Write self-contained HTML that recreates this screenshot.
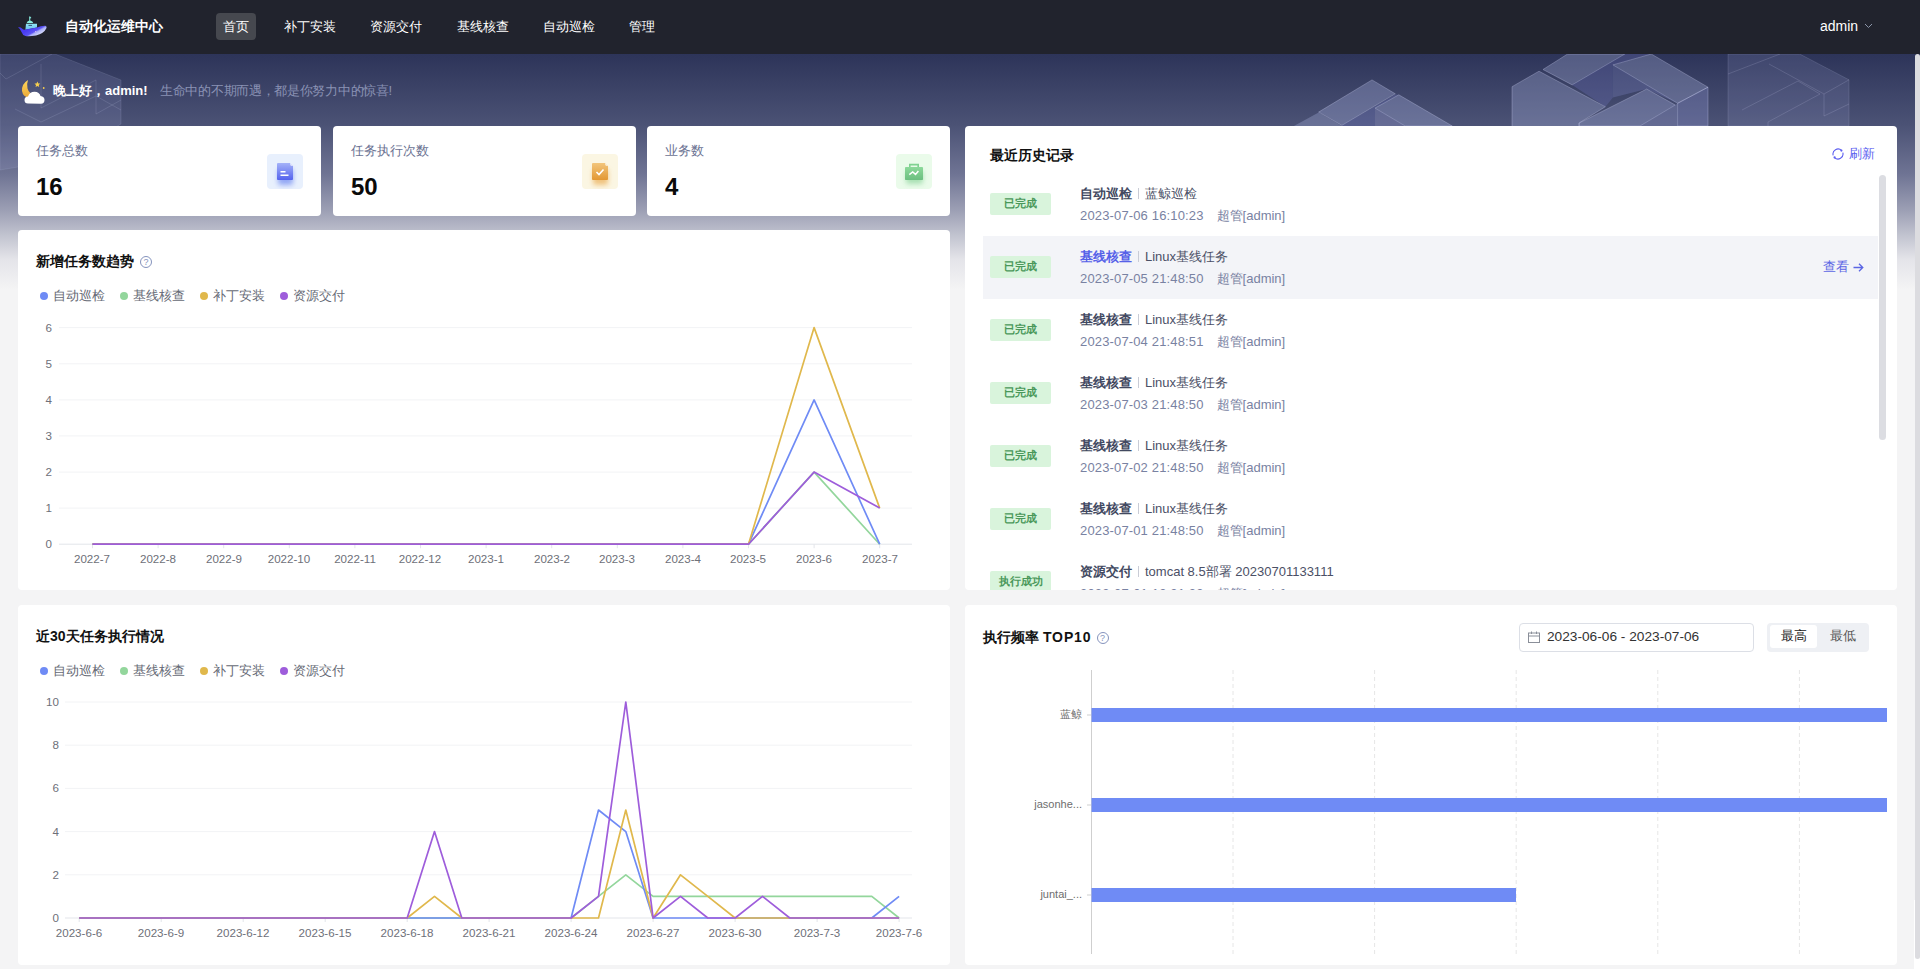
<!DOCTYPE html>
<html><head><meta charset="utf-8"><title>自动化运维中心</title>
<style>
*{box-sizing:border-box;margin:0;padding:0}
html,body{width:1920px;height:969px;overflow:hidden}
body{background:#f4f4f5;font-family:"Liberation Sans",sans-serif;position:relative;color:#222}
.abs{position:absolute}
#nav{position:absolute;left:0;top:0;width:1920px;height:54px;background:#21232d}
.ni{position:absolute;top:13px;height:27px;line-height:27px;font-size:13px;color:#fff;white-space:nowrap}
#banner{position:absolute;left:0;top:54px;width:1920px;height:236px;background:linear-gradient(180deg,#2d3459 0%,#4b5275 30%,#6f7494 51%,#9da0b5 66.5%,#c2c4d0 77%,#e4e4e9 87%,#f4f4f5 100%)}
.card{position:absolute;background:#fff;border-radius:4px}
.st-l{position:absolute;left:18px;top:16px;font-size:13px;color:#6b7292;line-height:17px}
.st-v{position:absolute;left:18px;top:47px;font-size:24px;font-weight:bold;color:#0a0a0a;line-height:28px}
.ibox{position:absolute;right:18px;top:28px;width:36px;height:35px;border-radius:4px}
.ptitle{position:absolute;font-size:14px;font-weight:bold;color:#111;line-height:18px;white-space:nowrap}
.lg{position:absolute;font-size:12.5px;color:#666a75;line-height:14px;white-space:nowrap}
.lg i{display:inline-block;width:8px;height:8px;border-radius:50%;margin-right:5px;vertical-align:0px}
.yl{position:absolute;font-size:11.6px;color:#6e7079;text-align:right;line-height:16px}
.xl{position:absolute;width:80px;text-align:center;font-size:11.6px;color:#6e7079;line-height:16px}
.row{position:absolute;left:18px;width:895px;height:63px}
.row.hl{background:#f3f4f8}
.tag{position:absolute;left:7px;top:20px;width:61px;height:22px;line-height:21px;text-align:center;background:#d9f4dc;color:#4a985a;font-size:11px;font-weight:600;border-radius:2px}
.r1{position:absolute;left:97px;top:12px;font-size:13px;line-height:17px;color:#4b5066;white-space:nowrap}
.r1 b{color:#424961}
.r1 b.lk{color:#5661e8;font-weight:bold}
.sep{display:inline-block;width:1px;height:11px;background:#c9ccd6;margin:0 6px 0 6px;vertical-align:-1px}
.r2{position:absolute;left:97px;top:34px;font-size:13px;line-height:17px;color:#7982a2;white-space:nowrap;letter-spacing:0.15px}
.who{margin-left:13px;letter-spacing:0}
.view{position:absolute;left:840px;top:22px;font-size:13px;line-height:17px;color:#5b66e4}
.q{display:inline-block;width:12px;height:12px;border:1px solid #8593bd;border-radius:50%;font-size:9px;line-height:10px;text-align:center;color:#8593bd;font-weight:normal;vertical-align:1px;margin-left:2px}
</style></head><body>
<div id="nav">
  <svg class="abs" style="left:17px;top:15px" width="31" height="23" viewBox="0 0 31 23">
    <defs>
      <linearGradient id="wg" gradientUnits="userSpaceOnUse" x1="16.5" y1="12" x2="21.5" y2="21"><stop offset="0" stop-color="#4a3cf2"/><stop offset="0.42" stop-color="#5a52f4"/><stop offset="0.58" stop-color="#a9aff8"/><stop offset="1" stop-color="#e0e4fc"/></linearGradient>
      <linearGradient id="cg" x1="0" y1="0" x2="0" y2="1"><stop offset="0" stop-color="#8fe6f2"/><stop offset="1" stop-color="#6cbef0"/></linearGradient>
    </defs>
    <path d="M12.1 1.6 L13.2 1.6 L14.4 3 L13.2 3.5 L13.2 5.5 Q16 6 16.2 8 L9.7 8 Q10 6 12.3 5.5 Z" fill="#88ecdf"/>
    <path d="M9 8.7 L20 8.7 L20 12.6 L8.4 14.8 Z" fill="url(#cg)"/>
    <rect x="11.5" y="9.9" width="3.5" height="1.1" fill="#3e5f86"/>
    <path d="M1 12.3 Q3.5 11.8 5 13.5 Q6.5 15 8.5 14.6 L20 12.6 Q24 10.6 28.5 10.8 Q30 11.5 29.5 13 Q27 18.5 19 20.5 Q12 21.7 8.5 21 Q5.5 20.3 4.5 17 Q3.5 14 1 12.3 Z" fill="url(#wg)"/>
    <circle cx="18.7" cy="16.6" r="0.6" fill="#e8c0f8"/>
  </svg>
  <div class="ni" style="left:65px;font-weight:bold;font-size:14px">自动化运维中心</div>
  <div class="abs" style="left:216px;top:13px;width:40px;height:27px;border-radius:4px;background:#46484f"></div>
  <div class="ni" style="left:223px">首页</div>
  <div class="ni" style="left:284px">补丁安装</div>
  <div class="ni" style="left:370px">资源交付</div>
  <div class="ni" style="left:457px">基线核查</div>
  <div class="ni" style="left:543px">自动巡检</div>
  <div class="ni" style="left:629px">管理</div>
  <div class="ni" style="left:1820px;font-size:14px">admin</div>
  <svg class="abs" style="left:1864px;top:23px" width="9" height="6" viewBox="0 0 9 6"><path d="M1 1 L4.5 4.5 L8 1" fill="none" stroke="#8c96aa" stroke-width="1"/></svg>
</div>
<div id="banner"></div>
<svg class="abs" style="left:0;top:54px" width="1920" height="240" viewBox="0 54 1920 240">
  <defs>
   <linearGradient id="tf" x1="0" y1="0" x2="1" y2="0"><stop offset="0" stop-color="rgba(185,195,235,0.32)"/><stop offset="0.5" stop-color="rgba(170,185,225,0.36)"/><stop offset="1" stop-color="rgba(190,195,235,0.3)"/></linearGradient>
  </defs>
  <g stroke="rgba(215,220,250,0.28)" stroke-width="1">
  <!-- cluster A -->
  <polygon points="1318.6,112.1 1372,79.9 1395.3,93.8 1341.9,125.4" fill="rgba(175,185,230,0.32)"/>
  <polygon points="1293.9,126 1318.6,112.6 1341.9,126" fill="rgba(175,185,230,0.3)" stroke="none"/>
  <polygon points="1341.9,125.4 1395.3,94.5 1398.8,94.8 1375,108.1 1375,126 1341.9,126" fill="rgba(120,125,205,0.28)" stroke="none"/>
  <polygon points="1375,108.1 1398.8,94.8 1452.3,126 1405.2,126" fill="rgba(175,185,230,0.32)"/>
  <polygon points="1375,108.1 1405.2,126 1375,126" fill="rgba(165,170,225,0.3)" stroke="none"/>
  <!-- cluster B -->
  <polygon points="1512,86.7 1539,71.2 1605.4,106.7 1579.1,123 1579.1,126.5 1512,126.5" fill="rgba(175,185,230,0.3)"/>
  <polygon points="1543,69.5 1567.6,54 1624.9,54 1572.2,84.9" fill="rgba(175,185,230,0.3)"/>
  <polygon points="1572.2,84.9 1624.9,54 1651.3,54 1612.9,64.9 1612.9,97.5 1605.4,106.7" fill="rgba(120,125,205,0.26)" stroke="none"/>
  <polygon points="1612.9,64.9 1651.3,54 1708,87.2 1677.6,103.3" fill="rgba(175,185,230,0.3)"/>
  <polygon points="1612.9,64.9 1677.6,103.3 1646.7,89 1612.9,97.5" fill="rgba(140,145,215,0.26)" stroke="none"/>
  <polygon points="1579.1,123 1646.7,89 1675.3,105 1640,126 1579.1,126" fill="rgba(175,185,230,0.32)"/>
  <polygon points="1677.6,103.3 1708,87.2 1708,126 1677.6,126" fill="rgba(150,155,220,0.3)"/>
  <polygon points="1640,126 1675.3,105 1677.6,103.3 1677.6,126" fill="rgba(160,165,220,0.3)" stroke="none"/>
  <!-- cluster C (faint) -->
  <polygon points="1728,54 1799.7,54 1849,79.8 1849,126 1728,126" fill="rgba(160,170,220,0.16)" stroke="rgba(215,220,250,0.14)"/>
  <polyline points="1728,74 1780,54" fill="none" stroke="rgba(215,220,250,0.16)"/>
  <polyline points="1769,64 1824,94 1849,79.8" fill="none" stroke="rgba(215,220,250,0.16)"/>
  <polyline points="1824,94 1824,116 1849,104" fill="none" stroke="rgba(215,220,250,0.16)"/>
  <polyline points="1742,110 1798,81 1820,94 1768,122 1768,126" fill="none" stroke="rgba(215,220,250,0.16)"/>
  <!-- right margin piece -->
  <!-- left cluster (faint) -->
  <polygon points="0,54 55,54 121,80 121,124 60,160 0,170" fill="rgba(160,170,220,0.16)" stroke="rgba(215,220,250,0.12)"/>
  <polyline points="0,73 6,79 52,54" fill="none" stroke="rgba(215,220,250,0.14)"/>
  <polyline points="41,64 41,108 96,80" fill="none" stroke="rgba(215,220,250,0.14)"/>
  <polyline points="15,109 41,122 96,96 121,110" fill="none" stroke="rgba(215,220,250,0.14)"/>
  <polyline points="96,80 96,114 121,100" fill="none" stroke="rgba(215,220,250,0.14)"/>
  </g>
</svg>
<!-- greeting -->
<svg class="abs" style="left:20px;top:78px" width="28" height="28" viewBox="0 0 28 28">
  <defs><linearGradient id="mg" x1="0" y1="0" x2="0" y2="1"><stop offset="0" stop-color="#ffd65a"/><stop offset="1" stop-color="#e9a838"/></linearGradient></defs>
  <path d="M8 2 Q1.5 6 2 13 Q3 19 9 19.5 Q13 19.5 15 16 Q9 16 7.5 10.5 Q6.5 6 8 2 Z" fill="url(#mg)"/>
  <path d="M17.4 3.5 L18.3 5.4 L20.3 5.6 L18.8 6.9 L19.2 8.9 L17.4 7.9 L15.6 8.9 L16 6.9 L14.5 5.6 L16.5 5.4 Z" fill="#f6cf4e"/>
  <circle cx="23.7" cy="10" r="0.9" fill="#f6cf4e"/>
  <path d="M8 25.5 Q4.5 25.5 4.5 22 Q4.5 18.8 8 18.5 Q9.5 14 14.5 13.8 Q19.5 14 20.5 18 Q24.5 18.5 24.5 22 Q24.5 25.5 21 25.8 Z" fill="#ffffff"/>
</svg>
<div class="abs" style="left:53px;top:82px;font-size:13px;font-weight:bold;color:#fff;line-height:18px;white-space:nowrap">晚上好，admin!</div>
<div class="abs" style="left:160px;top:82px;font-size:13px;color:#8a92b4;line-height:18px;white-space:nowrap;letter-spacing:-0.3px">生命中的不期而遇，都是你努力中的惊喜!</div>

<!-- stat cards -->
<div class="card" style="left:18px;top:126px;width:303px;height:90px">
  <div class="st-l">任务总数</div><div class="st-v">16</div>
  <div class="ibox" style="background:#e8f0fd">
    <svg width="36" height="35" viewBox="0 0 36 35"><defs><linearGradient id="g1" x1="0" y1="0" x2="0" y2="1"><stop offset="0" stop-color="#a4b2f8"/><stop offset="1" stop-color="#5563ee"/></linearGradient><filter id="f1" x="-50%" y="-50%" width="200%" height="200%"><feGaussianBlur stdDeviation="2.6"/></filter></defs>
    <rect x="11" y="15" width="15" height="16" rx="2" fill="#6f8af2" opacity="0.7" filter="url(#f1)"/>
    <path d="M11 9 L23 9 L26 12 L26 25 Q26 26 25 26 L11 26 Q10 26 10 25 L10 10 Q10 9 11 9 Z" fill="url(#g1)"/>
    <path d="M23 9 L26 12 L23.6 11.6 Z" fill="#fff" opacity="0.9"/><rect x="13.5" y="17" width="5" height="1.5" fill="#fff"/><rect x="13.5" y="20.5" width="8" height="1.5" fill="#fff"/>
    </svg>
  </div>
</div>
<div class="card" style="left:333px;top:126px;width:303px;height:90px">
  <div class="st-l">任务执行次数</div><div class="st-v">50</div>
  <div class="ibox" style="background:#fbf6e3">
    <svg width="36" height="35" viewBox="0 0 36 35"><defs><linearGradient id="g2" x1="0" y1="0" x2="0" y2="1"><stop offset="0" stop-color="#f2c57c"/><stop offset="1" stop-color="#e39833"/></linearGradient><filter id="f2" x="-50%" y="-50%" width="200%" height="200%"><feGaussianBlur stdDeviation="2.6"/></filter></defs>
    <rect x="11" y="15" width="15" height="16" rx="2" fill="#eaa84a" opacity="0.65" filter="url(#f2)"/>
    <path d="M11 9 L23 9 L26 12 L26 25 Q26 26 25 26 L11 26 Q10 26 10 25 L10 10 Q10 9 11 9 Z" fill="url(#g2)"/>
    <path d="M23 9 L26 12 L23.6 11.6 Z" fill="#fff" opacity="0.9"/><path d="M14.5 18 L17 20.5 L21.5 15.5" fill="none" stroke="#fff" stroke-width="1.6"/>
    </svg>
  </div>
</div>
<div class="card" style="left:647px;top:126px;width:303px;height:90px">
  <div class="st-l">业务数</div><div class="st-v">4</div>
  <div class="ibox" style="background:#eafbea">
    <svg width="36" height="35" viewBox="0 0 36 35"><defs><linearGradient id="g3" x1="0" y1="0" x2="0" y2="1"><stop offset="0" stop-color="#8cd99a"/><stop offset="1" stop-color="#6cbf80"/></linearGradient><filter id="f3" x="-50%" y="-50%" width="200%" height="200%"><feGaussianBlur stdDeviation="2.6"/></filter></defs>
    <rect x="10" y="17" width="17" height="13" rx="2" fill="#7fcf90" opacity="0.6" filter="url(#f3)"/>
    <path d="M13.8 13 L13.8 10.6 L22.2 10.6 L22.2 13" fill="none" stroke="#80d291" stroke-width="1.6"/>
    <rect x="9" y="13" width="18" height="13" rx="0.8" fill="url(#g3)"/>
    <path d="M13.3 20.6 L16.7 18 L19.5 20.4 L22.4 17" fill="none" stroke="#fff" stroke-width="1.5"/>
    </svg>
  </div>
</div>

<!-- panels -->
<div class="card" style="left:18px;top:230px;width:932px;height:360px"></div>
<div class="card" style="left:965px;top:126px;width:932px;height:464px;overflow:hidden">
  <div class="ptitle" style="left:25px;top:20px">最近历史记录</div>
  <svg class="abs" style="left:867px;top:22px" width="12" height="12" viewBox="0 0 12 12"><path d="M10.83 4.71 A5 5 0 0 1 2.46 9.54" fill="none" stroke="#5d5ff0" stroke-width="1.1"/><path d="M1.17 7.29 A5 5 0 0 1 9.54 2.46" fill="none" stroke="#5d5ff0" stroke-width="1.1"/><circle cx="2.6" cy="9.4" r="1.1" fill="#5d5ff0"/><circle cx="9.4" cy="2.6" r="1.1" fill="#5d5ff0"/></svg>
  <div class="abs" style="left:884px;top:20px;font-size:13px;color:#5d5ff0;line-height:16px;white-space:nowrap">刷新</div>
  <div class="row" style="top:47px">
<span class="tag">已完成</span>
<div class="r1"><b>自动巡检</b><i class="sep"></i><span>蓝鲸巡检</span></div>
<div class="r2">2023-07-06 16:10:23<span class="who">超管[admin]</span></div>

</div>
<div class="row hl" style="top:110px">
<span class="tag">已完成</span>
<div class="r1"><b class="lk">基线核查</b><i class="sep"></i><span>Linux基线任务</span></div>
<div class="r2">2023-07-05 21:48:50<span class="who">超管[admin]</span></div>
<div class="view">查看</div><svg class="abs" style="left:870px;top:27px" width="11" height="9" viewBox="0 0 11 9"><path d="M0.5 4.5 L10 4.5 M6 0.8 L9.8 4.5 L6 8.2" fill="none" stroke="#5b66e4" stroke-width="1.3"/></svg>
</div>
<div class="row" style="top:173px">
<span class="tag">已完成</span>
<div class="r1"><b>基线核查</b><i class="sep"></i><span>Linux基线任务</span></div>
<div class="r2">2023-07-04 21:48:51<span class="who">超管[admin]</span></div>

</div>
<div class="row" style="top:236px">
<span class="tag">已完成</span>
<div class="r1"><b>基线核查</b><i class="sep"></i><span>Linux基线任务</span></div>
<div class="r2">2023-07-03 21:48:50<span class="who">超管[admin]</span></div>

</div>
<div class="row" style="top:299px">
<span class="tag">已完成</span>
<div class="r1"><b>基线核查</b><i class="sep"></i><span>Linux基线任务</span></div>
<div class="r2">2023-07-02 21:48:50<span class="who">超管[admin]</span></div>

</div>
<div class="row" style="top:362px">
<span class="tag">已完成</span>
<div class="r1"><b>基线核查</b><i class="sep"></i><span>Linux基线任务</span></div>
<div class="r2">2023-07-01 21:48:50<span class="who">超管[admin]</span></div>

</div>
<div class="row" style="top:425px">
<span class="tag">执行成功</span>
<div class="r1"><b>资源交付</b><i class="sep"></i><span>tomcat 8.5部署 20230701133111</span></div>
<div class="r2">2023-07-01 13:31:33<span class="who">超管[admin]</span></div>

</div>
  <div class="abs" style="left:914px;top:49px;width:7px;height:265px;border-radius:4px;background:#dcdde2"></div>
</div>
<div class="card" style="left:18px;top:605px;width:932px;height:360px"></div>
<div class="card" style="left:965px;top:605px;width:932px;height:360px"></div>

<!-- chart texts -->
<div class="ptitle" style="left:36px;top:252px">新增任务数趋势 <span class="q">?</span></div>
<div class="lg" style="left:40px;top:289px"><i style="background:#6f8bf5"></i>自动巡检</div>
<div class="lg" style="left:120px;top:289px"><i style="background:#93d69c"></i>基线核查</div>
<div class="lg" style="left:200px;top:289px"><i style="background:#e0b84c"></i>补丁安装</div>
<div class="lg" style="left:280px;top:289px"><i style="background:#9e5ddb"></i>资源交付</div>
<div class="ptitle" style="left:36px;top:627px">近30天任务执行情况</div>
<div class="lg" style="left:40px;top:664px"><i style="background:#6f8bf5"></i>自动巡检</div>
<div class="lg" style="left:120px;top:664px"><i style="background:#93d69c"></i>基线核查</div>
<div class="lg" style="left:200px;top:664px"><i style="background:#e0b84c"></i>补丁安装</div>
<div class="lg" style="left:280px;top:664px"><i style="background:#9e5ddb"></i>资源交付</div>
<div class="ptitle" style="left:983px;top:628px">执行频率 <span style="letter-spacing:0.9px">TOP10</span><span class="q" style="margin-left:5px">?</span></div>
<div class="yl" style="left:30px;top:536px;width:22px">0</div>
<div class="yl" style="left:30px;top:500px;width:22px">1</div>
<div class="yl" style="left:30px;top:464px;width:22px">2</div>
<div class="yl" style="left:30px;top:428px;width:22px">3</div>
<div class="yl" style="left:30px;top:392px;width:22px">4</div>
<div class="yl" style="left:30px;top:356px;width:22px">5</div>
<div class="yl" style="left:30px;top:320px;width:22px">6</div>
<div class="xl" style="left:52px;top:551px">2022-7</div>
<div class="xl" style="left:118px;top:551px">2022-8</div>
<div class="xl" style="left:184px;top:551px">2022-9</div>
<div class="xl" style="left:249px;top:551px">2022-10</div>
<div class="xl" style="left:315px;top:551px">2022-11</div>
<div class="xl" style="left:380px;top:551px">2022-12</div>
<div class="xl" style="left:446px;top:551px">2023-1</div>
<div class="xl" style="left:512px;top:551px">2023-2</div>
<div class="xl" style="left:577px;top:551px">2023-3</div>
<div class="xl" style="left:643px;top:551px">2023-4</div>
<div class="xl" style="left:708px;top:551px">2023-5</div>
<div class="xl" style="left:774px;top:551px">2023-6</div>
<div class="xl" style="left:840px;top:551px">2023-7</div>
<div class="yl" style="left:30px;top:910px;width:29px">0</div>
<div class="yl" style="left:30px;top:867px;width:29px">2</div>
<div class="yl" style="left:30px;top:824px;width:29px">4</div>
<div class="yl" style="left:30px;top:780px;width:29px">6</div>
<div class="yl" style="left:30px;top:737px;width:29px">8</div>
<div class="yl" style="left:30px;top:694px;width:29px">10</div>
<div class="xl" style="left:39px;top:925px">2023-6-6</div>
<div class="xl" style="left:121px;top:925px">2023-6-9</div>
<div class="xl" style="left:203px;top:925px">2023-6-12</div>
<div class="xl" style="left:285px;top:925px">2023-6-15</div>
<div class="xl" style="left:367px;top:925px">2023-6-18</div>
<div class="xl" style="left:449px;top:925px">2023-6-21</div>
<div class="xl" style="left:531px;top:925px">2023-6-24</div>
<div class="xl" style="left:613px;top:925px">2023-6-27</div>
<div class="xl" style="left:695px;top:925px">2023-6-30</div>
<div class="xl" style="left:777px;top:925px">2023-7-3</div>
<div class="xl" style="left:859px;top:925px">2023-7-6</div>
<div class="abs" style="left:1000px;top:706px;width:82px;text-align:right;font-size:11px;color:#6e6e6e;line-height:16px">蓝鲸</div>
<div class="abs" style="left:1000px;top:796px;width:82px;text-align:right;font-size:11px;color:#6e6e6e;line-height:16px">jasonhe...</div>
<div class="abs" style="left:1000px;top:886px;width:82px;text-align:right;font-size:11px;color:#6e6e6e;line-height:16px">juntai_...</div>
<!-- date picker -->
<div class="abs" style="left:1519px;top:623px;width:235px;height:29px;border:1px solid #dcdfe6;border-radius:4px;background:#fff"></div>
<svg class="abs" style="left:1528px;top:631px" width="12" height="12" viewBox="0 0 12 12"><rect x="0.5" y="2" width="11" height="9.5" fill="none" stroke="#8a8f99" stroke-width="1"/><line x1="0.5" y1="5" x2="11.5" y2="5" stroke="#8a8f99"/><line x1="3.5" y1="0.5" x2="3.5" y2="3" stroke="#8a8f99"/><line x1="8.5" y1="0.5" x2="8.5" y2="3" stroke="#8a8f99"/></svg>
<div class="abs" style="left:1547px;top:629px;font-size:13.7px;color:#333;line-height:16px;white-space:nowrap">2023-06-06 - 2023-07-06</div>
<div class="abs" style="left:1767px;top:623px;width:102px;height:29px;border-radius:4px;background:#eef0f4"></div>
<div class="abs" style="left:1770px;top:625px;width:47px;height:23px;border-radius:3px;background:#fff"></div>
<div class="abs" style="left:1770px;top:628px;width:47px;text-align:center;font-size:13px;color:#222;line-height:16px">最高</div>
<div class="abs" style="left:1819px;top:628px;width:47px;text-align:center;font-size:13px;color:#555;line-height:16px">最低</div>

<svg class="abs" style="left:0;top:0" width="1920" height="969">
<line x1="59" y1="508.1" x2="912" y2="508.1" stroke="#f2f3f5" stroke-width="1"/>
<line x1="59" y1="472.1" x2="912" y2="472.1" stroke="#f2f3f5" stroke-width="1"/>
<line x1="59" y1="435.9" x2="912" y2="435.9" stroke="#f2f3f5" stroke-width="1"/>
<line x1="59" y1="399.9" x2="912" y2="399.9" stroke="#f2f3f5" stroke-width="1"/>
<line x1="59" y1="363.8" x2="912" y2="363.8" stroke="#f2f3f5" stroke-width="1"/>
<line x1="59" y1="327.6" x2="912" y2="327.6" stroke="#f2f3f5" stroke-width="1"/>
<line x1="59" y1="544.2" x2="912" y2="544.2" stroke="#e3e5ea" stroke-width="1"/>
<line x1="92.5" y1="544.2" x2="92.5" y2="548.2" stroke="#e3e5ea" stroke-width="1"/>
<line x1="158.1" y1="544.2" x2="158.1" y2="548.2" stroke="#e3e5ea" stroke-width="1"/>
<line x1="223.7" y1="544.2" x2="223.7" y2="548.2" stroke="#e3e5ea" stroke-width="1"/>
<line x1="289.3" y1="544.2" x2="289.3" y2="548.2" stroke="#e3e5ea" stroke-width="1"/>
<line x1="354.9" y1="544.2" x2="354.9" y2="548.2" stroke="#e3e5ea" stroke-width="1"/>
<line x1="420.5" y1="544.2" x2="420.5" y2="548.2" stroke="#e3e5ea" stroke-width="1"/>
<line x1="486.1" y1="544.2" x2="486.1" y2="548.2" stroke="#e3e5ea" stroke-width="1"/>
<line x1="551.7" y1="544.2" x2="551.7" y2="548.2" stroke="#e3e5ea" stroke-width="1"/>
<line x1="617.3" y1="544.2" x2="617.3" y2="548.2" stroke="#e3e5ea" stroke-width="1"/>
<line x1="682.9" y1="544.2" x2="682.9" y2="548.2" stroke="#e3e5ea" stroke-width="1"/>
<line x1="748.5" y1="544.2" x2="748.5" y2="548.2" stroke="#e3e5ea" stroke-width="1"/>
<line x1="814.1" y1="544.2" x2="814.1" y2="548.2" stroke="#e3e5ea" stroke-width="1"/>
<line x1="879.7" y1="544.2" x2="879.7" y2="548.2" stroke="#e3e5ea" stroke-width="1"/>
<polyline fill="none" stroke="#93d69c" stroke-width="1.7" stroke-linejoin="round" points="92.5,544.2 158.1,544.2 223.7,544.2 289.3,544.2 354.9,544.2 420.5,544.2 486.1,544.2 551.7,544.2 617.3,544.2 682.9,544.2 748.5,544.2 814.1,472.1 879.7,544.2"/>
<polyline fill="none" stroke="#6f8bf5" stroke-width="1.7" stroke-linejoin="round" points="92.5,544.2 158.1,544.2 223.7,544.2 289.3,544.2 354.9,544.2 420.5,544.2 486.1,544.2 551.7,544.2 617.3,544.2 682.9,544.2 748.5,544.2 814.1,399.9 879.7,544.2"/>
<polyline fill="none" stroke="#e0b84c" stroke-width="1.7" stroke-linejoin="round" points="92.5,544.2 158.1,544.2 223.7,544.2 289.3,544.2 354.9,544.2 420.5,544.2 486.1,544.2 551.7,544.2 617.3,544.2 682.9,544.2 748.5,544.2 814.1,327.6 879.7,508.1"/>
<polyline fill="none" stroke="#9e5ddb" stroke-width="1.7" stroke-linejoin="round" points="92.5,544.2 158.1,544.2 223.7,544.2 289.3,544.2 354.9,544.2 420.5,544.2 486.1,544.2 551.7,544.2 617.3,544.2 682.9,544.2 748.5,544.2 814.1,472.1 879.7,508.1"/>
<line x1="65" y1="874.8" x2="912" y2="874.8" stroke="#f2f3f5" stroke-width="1"/>
<line x1="65" y1="831.6" x2="912" y2="831.6" stroke="#f2f3f5" stroke-width="1"/>
<line x1="65" y1="788.4" x2="912" y2="788.4" stroke="#f2f3f5" stroke-width="1"/>
<line x1="65" y1="745.2" x2="912" y2="745.2" stroke="#f2f3f5" stroke-width="1"/>
<line x1="65" y1="702.0" x2="912" y2="702.0" stroke="#f2f3f5" stroke-width="1"/>
<line x1="65" y1="918.0" x2="912" y2="918.0" stroke="#e3e5ea" stroke-width="1"/>
<line x1="79.2" y1="918.0" x2="79.2" y2="922.0" stroke="#e3e5ea" stroke-width="1"/>
<line x1="161.2" y1="918.0" x2="161.2" y2="922.0" stroke="#e3e5ea" stroke-width="1"/>
<line x1="243.2" y1="918.0" x2="243.2" y2="922.0" stroke="#e3e5ea" stroke-width="1"/>
<line x1="325.2" y1="918.0" x2="325.2" y2="922.0" stroke="#e3e5ea" stroke-width="1"/>
<line x1="407.2" y1="918.0" x2="407.2" y2="922.0" stroke="#e3e5ea" stroke-width="1"/>
<line x1="489.1" y1="918.0" x2="489.1" y2="922.0" stroke="#e3e5ea" stroke-width="1"/>
<line x1="571.1" y1="918.0" x2="571.1" y2="922.0" stroke="#e3e5ea" stroke-width="1"/>
<line x1="653.1" y1="918.0" x2="653.1" y2="922.0" stroke="#e3e5ea" stroke-width="1"/>
<line x1="735.1" y1="918.0" x2="735.1" y2="922.0" stroke="#e3e5ea" stroke-width="1"/>
<line x1="817.1" y1="918.0" x2="817.1" y2="922.0" stroke="#e3e5ea" stroke-width="1"/>
<line x1="899.1" y1="918.0" x2="899.1" y2="922.0" stroke="#e3e5ea" stroke-width="1"/>
<polyline fill="none" stroke="#93d69c" stroke-width="1.7" stroke-linejoin="round" points="79.2,918.0 106.5,918.0 133.9,918.0 161.2,918.0 188.5,918.0 215.8,918.0 243.2,918.0 270.5,918.0 297.8,918.0 325.2,918.0 352.5,918.0 379.8,918.0 407.2,918.0 434.5,918.0 461.8,918.0 489.1,918.0 516.5,918.0 543.8,918.0 571.1,918.0 598.5,896.4 625.8,874.8 653.1,896.4 680.5,896.4 707.8,896.4 735.1,896.4 762.5,896.4 789.8,896.4 817.1,896.4 844.4,896.4 871.8,896.4 899.1,918.0"/>
<polyline fill="none" stroke="#6f8bf5" stroke-width="1.7" stroke-linejoin="round" points="79.2,918.0 106.5,918.0 133.9,918.0 161.2,918.0 188.5,918.0 215.8,918.0 243.2,918.0 270.5,918.0 297.8,918.0 325.2,918.0 352.5,918.0 379.8,918.0 407.2,918.0 434.5,918.0 461.8,918.0 489.1,918.0 516.5,918.0 543.8,918.0 571.1,918.0 598.5,810.0 625.8,831.6 653.1,918.0 680.5,918.0 707.8,918.0 735.1,918.0 762.5,918.0 789.8,918.0 817.1,918.0 844.4,918.0 871.8,918.0 899.1,896.4"/>
<polyline fill="none" stroke="#e0b84c" stroke-width="1.7" stroke-linejoin="round" points="79.2,918.0 106.5,918.0 133.9,918.0 161.2,918.0 188.5,918.0 215.8,918.0 243.2,918.0 270.5,918.0 297.8,918.0 325.2,918.0 352.5,918.0 379.8,918.0 407.2,918.0 434.5,896.4 461.8,918.0 489.1,918.0 516.5,918.0 543.8,918.0 571.1,918.0 598.5,918.0 625.8,810.0 653.1,918.0 680.5,874.8 707.8,896.4 735.1,918.0 762.5,918.0 789.8,918.0 817.1,918.0 844.4,918.0 871.8,918.0 899.1,918.0"/>
<polyline fill="none" stroke="#9e5ddb" stroke-width="1.7" stroke-linejoin="round" points="79.2,918.0 106.5,918.0 133.9,918.0 161.2,918.0 188.5,918.0 215.8,918.0 243.2,918.0 270.5,918.0 297.8,918.0 325.2,918.0 352.5,918.0 379.8,918.0 407.2,918.0 434.5,831.6 461.8,918.0 489.1,918.0 516.5,918.0 543.8,918.0 571.1,918.0 598.5,896.4 625.8,702.0 653.1,918.0 680.5,896.4 707.8,918.0 735.1,918.0 762.5,896.4 789.8,918.0 817.1,918.0 844.4,918.0 871.8,918.0 899.1,918.0"/>
<line x1="1233" y1="670" x2="1233" y2="954" stroke="#e6e6e6" stroke-width="1" stroke-dasharray="4,3"/>
<line x1="1374.6" y1="670" x2="1374.6" y2="954" stroke="#e6e6e6" stroke-width="1" stroke-dasharray="4,3"/>
<line x1="1516.2" y1="670" x2="1516.2" y2="954" stroke="#e6e6e6" stroke-width="1" stroke-dasharray="4,3"/>
<line x1="1657.8" y1="670" x2="1657.8" y2="954" stroke="#e6e6e6" stroke-width="1" stroke-dasharray="4,3"/>
<line x1="1799.4" y1="670" x2="1799.4" y2="954" stroke="#e6e6e6" stroke-width="1" stroke-dasharray="4,3"/>
<line x1="1091.5" y1="670" x2="1091.5" y2="954" stroke="#cfcfcf" stroke-width="1"/>
<line x1="1087" y1="715" x2="1091" y2="715" stroke="#cfcfcf" stroke-width="1"/>
<line x1="1087" y1="805" x2="1091" y2="805" stroke="#cfcfcf" stroke-width="1"/>
<line x1="1087" y1="895" x2="1091" y2="895" stroke="#cfcfcf" stroke-width="1"/>
<rect x="1091.5" y="708" width="795.5" height="14" fill="#6f8bf5"/>
<rect x="1091.5" y="798" width="795.5" height="14" fill="#6f8bf5"/>
<rect x="1091.5" y="888" width="424.5" height="14" fill="#6f8bf5"/>
</svg>
<!-- page scrollbar -->
<div class="abs" style="left:1914px;top:900px;width:6px;height:69px;background:#fff"></div>
<div class="abs" style="left:1915px;top:54px;width:5px;height:905px;border-radius:3px;background:#dcdce0"></div>
</body></html>
